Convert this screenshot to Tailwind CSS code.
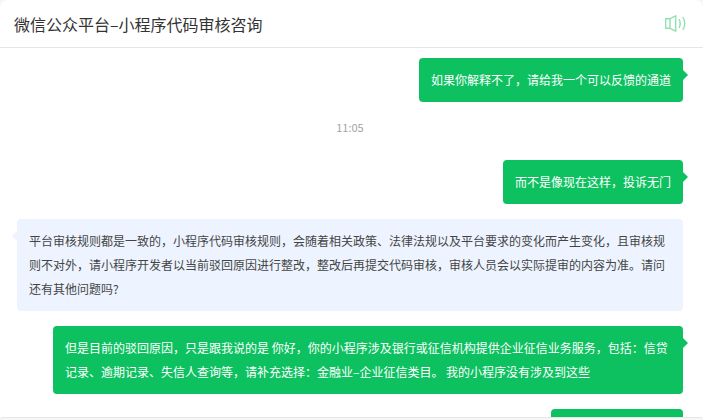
<!DOCTYPE html>
<html lang="zh-CN">
<head>
    <meta charset="UTF-8">
    <meta name="viewport" content="width=device-width, initial-scale=1.0">
    <title>微信公众平台–小程序代码审核咨询</title>
    <script src="https://cdn.jsdelivr.net/npm/@tailwindcss/browser@4"></script>
</head>
<body class="bg-[#f5f5f5] font-['Noto_Sans_CJK_SC','Noto_Sans',sans-serif]">
    <div class="flex h-[420px] w-[703px] flex-col overflow-hidden rounded-t-lg bg-white">
        <!-- header -->
        <header class="flex h-12 shrink-0 items-center justify-between border-b border-[#e5e5e5] pl-[14px] pr-[17px]">
            <h1 class="text-base leading-6 font-normal text-[#333]">微信公众平台–小程序代码审核咨询</h1>
            <svg class="h-[17px] w-[21px]" viewBox="0 0 21 17" fill="none" stroke="#93e0b4" stroke-width="1.4">
                <path d="M.7 3.7H5v9.6H.7z"/>
                <path d="M5 3.7 10.7.9v15.2L5 13.3"/>
                <path d="M14 4c1.5 2.8 1.5 6.2 0 9"/>
                <path d="M17.8 2c2.4 4 2.4 9 0 13"/>
            </svg>
        </header>

        <!-- messages -->
        <main class="flex min-h-0 flex-1 flex-col gap-[15px] overflow-hidden pl-[17px] pr-5 pt-[10px] text-xs leading-6">
            <div class="flex justify-end">
                <div class="relative rounded bg-[#0dc160] px-3 py-[10px] text-white">
                    如果你解释不了&#65292;请给我一个可以反馈的通道
                    <span class="absolute -right-[5px] top-[12px] h-0 w-0 border-y-[5px] border-l-[5px] border-y-transparent border-l-[#0dc160]"></span>
                </div>
            </div>

            <div class="-mt-0.5 pb-1.5 text-center text-[11px] text-[#a3a3a3]">11:05</div>

            <div class="flex justify-end">
                <div class="relative rounded bg-[#0dc160] px-3 py-[10px] text-white">
                    而不是像现在这样&#65292;投诉无门
                    <span class="absolute -right-[5px] top-[12px] h-0 w-0 border-y-[5px] border-l-[5px] border-y-transparent border-l-[#0dc160]"></span>
                </div>
            </div>

            <div class="relative rounded bg-[#edf4ff] px-3 py-[10px] text-[#444]">
                平台审核规则都是一致的&#65292;小程序代码审核规则&#65292;会随着相关政策、法律法规以及平台要求的变化而产生变化&#65292;且审核规则不对外&#65292;请小程序开发者以当前驳回原因进行整改&#65292;整改后再提交代码审核&#65292;审核人员会以实际提审的内容为准。请问还有其他问题吗?
                <span class="absolute -left-[5px] top-[12px] h-0 w-0 border-y-[5px] border-r-[5px] border-y-transparent border-r-[#edf4ff]"></span>
            </div>

            <div class="flex justify-end">
                <div class="relative max-w-[630px] rounded bg-[#0dc160] px-3 py-[10px] text-white">
                    但是目前的驳回原因&#65292;只是跟我说的是 你好&#65292;你的小程序涉及银行或征信机构提供企业征信业务服务&#65292;包括&#65306;信贷记录、逾期记录、失信人查询等&#65292;请补充选择&#65306;金融业–企业征信类目。 我的小程序没有涉及到这些
                    <span class="absolute -right-[5px] top-[12px] h-0 w-0 border-y-[5px] border-l-[5px] border-y-transparent border-l-[#0dc160]"></span>
                </div>
            </div>

            <!-- next bubble, cut off by the footer -->
            <div class="flex justify-end">
                <div class="h-11 w-[132px] shrink-0 rounded bg-[#0dc160]"></div>
            </div>
        </main>

        <footer class="h-[3px] shrink-0 rounded-t-[4px] border-t border-[#e5e5e5] bg-[#f7f7f7]"></footer>
    </div>
</body>
</html>
